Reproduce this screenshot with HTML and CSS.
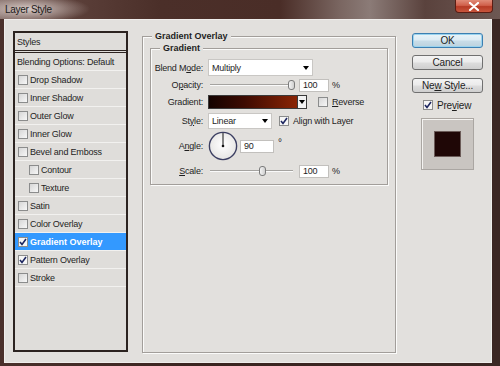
FILE: index.html
```html
<!DOCTYPE html>
<html lang="en">
<head>
    <meta charset="UTF-8">
    <title>Layer Style</title>
    <link rel="stylesheet" href="styles.css">
</head>
<body>

    <div class="window">
        <div class="titlebar">
            <span class="title">Layer Style</span>
            <div class="close">
                <svg width="12" height="9" viewBox="0 0 12 9"><path d="M2 1 L10 8 M10 1 L2 8" stroke="#fff" stroke-width="2.2" stroke-linecap="round"/></svg>
            </div>
        </div>

        <div class="client">
            <!-- Styles list -->
            <div class="style-list">
                <div class="item head">Styles</div>
                <div class="item plain">Blending Options: Default</div>
                <div class="item"><span class="cb"></span>Drop Shadow</div>
                <div class="item"><span class="cb"></span>Inner Shadow</div>
                <div class="item"><span class="cb"></span>Outer Glow</div>
                <div class="item"><span class="cb"></span>Inner Glow</div>
                <div class="item"><span class="cb"></span>Bevel and Emboss</div>
                <div class="item sub"><span class="cb"></span>Contour</div>
                <div class="item sub"><span class="cb"></span>Texture</div>
                <div class="item"><span class="cb"></span>Satin</div>
                <div class="item"><span class="cb"></span>Color Overlay</div>
                <div class="item selected"><span class="cb checked"><svg width="8" height="8" viewBox="0 0 8 8"><path d="M1 4 L3 6.5 L7 1" stroke="#1d2660" stroke-width="1.6" fill="none"/></svg></span>Gradient Overlay</div>
                <div class="item"><span class="cb checked"><svg width="8" height="8" viewBox="0 0 8 8"><path d="M1 4 L3 6.5 L7 1" stroke="#1d2660" stroke-width="1.6" fill="none"/></svg></span>Pattern Overlay</div>
                <div class="item"><span class="cb"></span>Stroke</div>
            </div>

            <!-- Gradient overlay settings -->
            <fieldset class="group outer">
                <legend>Gradient Overlay</legend>
                <fieldset class="group inner">
                    <legend>Gradient</legend>

                    <div class="row r-blend">
                        <label>Blend M<u>o</u>de:</label>
                        <div class="select wide">Multiply<span class="arrow"></span></div>
                    </div>

                    <div class="row r-opacity">
                        <label>O<u>p</u>acity:</label>
                        <div class="slider"><span class="track"></span><span class="thumb" style="left: 80px"></span></div>
                        <div class="input num">100</div>
                        <span class="unit">%</span>
                    </div>

                    <div class="row r-gradient">
                        <label>Gradient:</label>
                        <div class="gradient-pick"><span class="ramp"></span><span class="drop"><span class="arrow"></span></span></div>
                        <span class="cb"></span>
                        <span class="cb-label"><u>R</u>everse</span>
                    </div>

                    <div class="row r-style">
                        <label>St<u>y</u>le:</label>
                        <div class="select short">Linear<span class="arrow"></span></div>
                        <span class="cb checked"><svg width="8" height="8" viewBox="0 0 8 8"><path d="M1 4 L3 6.5 L7 1" stroke="#1d2660" stroke-width="1.6" fill="none"/></svg></span>
                        <span class="cb-label">Ali<u>g</u>n with Layer</span>
                    </div>

                    <div class="row r-angle">
                        <label>A<u>n</u>gle:</label>
                        <svg class="dial" width="30" height="30" viewBox="0 0 30 30">
                            <defs>
                                <radialGradient id="dialFill" cx="50%" cy="45%" r="60%">
                                    <stop offset="0" stop-color="#ffffff"/>
                                    <stop offset="1" stop-color="#e4e3e1"/>
                                </radialGradient>
                            </defs>
                            <circle cx="15" cy="15" r="13.6" fill="url(#dialFill)" stroke="#3c3f62" stroke-width="1.4"/>
                            <line x1="15" y1="15" x2="15" y2="2" stroke="#111" stroke-width="1"/>
                            <circle cx="15" cy="15" r="1.3" fill="#111"/>
                        </svg>
                        <div class="input angle">90</div>
                        <span class="unit deg">°</span>
                    </div>

                    <div class="row r-scale">
                        <label><u>S</u>cale:</label>
                        <div class="slider"><span class="track"></span><span class="thumb" style="left: 51px"></span></div>
                        <div class="input num">100</div>
                        <span class="unit">%</span>
                    </div>
                </fieldset>
            </fieldset>

            <!-- Buttons and preview -->
            <div class="side">
                <div class="btn default"><span>OK</span></div>
                <div class="btn"><span>Cancel</span></div>
                <div class="btn"><span>Ne<u>w</u> Style...</span></div>
                <div class="preview-check">
                    <span class="cb checked"><svg width="8" height="8" viewBox="0 0 8 8"><path d="M1 4 L3 6.5 L7 1" stroke="#1d2660" stroke-width="1.6" fill="none"/></svg></span>
                    <span class="cb-label">Pre<u>v</u>iew</span>
                </div>
                <div class="swatch"><div class="swatch-inner"></div></div>
            </div>
        </div>
    </div>

</body>
</html>
```

FILE: styles.css
```css
body {
    margin: 0;
    background-color: #3a2622;
    font-family: 'Liberation Sans', Arial, sans-serif;
    font-size: 9px;
    letter-spacing: -0.2px;
    color: #1e1e1e;
}

.window {
    width: 500px;
    height: 366px;
    display: flex;
    flex-direction: column;
    background: linear-gradient(90deg, #4a302b 0, #3a2420 40%, #3b2723 100%);
}

/* Title bar */
.titlebar {
    height: 19px;
    flex-shrink: 0;
    display: flex;
    align-items: center;
    padding-left: 5px;
    background:
        radial-gradient(ellipse 62px 14px at 28px 9px, rgba(226, 214, 210, 0.9), rgba(226, 214, 210, 0)),
        linear-gradient(90deg, #7c6560 0, #5c403a 70px, #4b2f29 160px, #4a2d27 280px, #7a6661 340px, #8b7b77 370px, #5a423d 425px, #6d5853 500px);
}

.title {
    font-size: 10px;
    letter-spacing: -0.3px;
    color: #1a1a1a;
}

.close {
    margin-left: auto;
    margin-right: 7px;
    align-self: flex-start;
    width: 38px;
    height: 13px;
    box-sizing: border-box;
    border: 1px solid #5a1d14;
    border-top: none;
    border-radius: 0 0 4px 4px;
    background: linear-gradient(#e08b78 0, #d0604b 45%, #b63a25 55%, #c9563d 100%);
    display: flex;
    align-items: center;
    justify-content: center;
}

/* Client area */
.client {
    flex: 1;
    margin: 0 8px 3px 4px;
    background-color: #e2e0dd;
    border: 1px solid #efedeb;
    display: flex;
    align-items: flex-start;
    padding: 11px 8px 0 8px;
}

/* Styles list */
.style-list {
    width: 115px;
    height: 321px;
    box-sizing: border-box;
    border: 2px solid #2c2320;
    background-color: #dfddda;
    flex-shrink: 0;
}

.item {
    height: 17px;
    border-bottom: 1px solid #f2f1ef;
    display: flex;
    align-items: center;
    padding-left: 3px;
    white-space: nowrap;
}

.item.head,
.item.plain {
    padding-left: 2px;
}

.item.head {
    border-bottom: 3px double #2c2320;
}

.item.sub {
    padding-left: 14px;
}

.item.selected {
    background-color: #3399ff;
    color: #fff;
    font-weight: bold;
    letter-spacing: 0;
}

.item .cb {
    margin-right: 2px;
}

/* Checkbox */
.cb {
    width: 10px;
    height: 10px;
    box-sizing: border-box;
    border: 1px solid #8b8c8c;
    background: linear-gradient(135deg, #d6d6d6, #f7f7f7);
    display: inline-flex;
    align-items: center;
    justify-content: center;
    flex-shrink: 0;
}

.cb.checked {
    background: #f6f6f6;
}

.cb-label {
    margin-left: 4px;
}

/* Group boxes */
.group {
    margin: 0;
    min-width: 0;
    border: 1px solid #a29e9a;
    box-shadow: inset 1px 1px 0 #fbfbfa, 1px 1px 0 #fbfbfa;
}

.group legend {
    font-weight: bold;
    letter-spacing: 0;
    line-height: 11px;
    padding: 0 3px;
    background-color: #e2e0dd;
}

.outer {
    width: 254px;
    height: 322px;
    box-sizing: border-box;
    margin-left: 14px;
    padding: 0 7px;
    flex-shrink: 0;
}

.outer > legend {
    margin-left: 2px;
}

.inner {
    margin-top: 1px;
    padding: 5px 0 6px 0;
}

.inner > legend {
    margin-left: 9px;
}

/* Form rows */
.row {
    display: flex;
    align-items: center;
}

.row label {
    width: 52px;
    text-align: right;
    margin-right: 5px;
    flex-shrink: 0;
}

.r-blend { height: 17px; }
.r-opacity { height: 16px; margin-top: 1px; }
.r-gradient { height: 16px; margin-top: 1px; }
.r-style { height: 17px; margin-top: 2px; }
.r-angle { height: 30px; margin-top: 2px; }
.r-scale { height: 14px; margin-top: 3px; }

.select {
    height: 17px;
    box-sizing: border-box;
    background-color: #fff;
    border: 1px solid #c9c7c4;
    display: flex;
    align-items: center;
    padding-left: 3px;
}

.select.wide { width: 105px; }
.select.short { width: 64px; height: 16px; margin-right: 7px; }

.select .arrow {
    margin-left: auto;
    margin-right: 3px;
}

.arrow {
    width: 0;
    height: 0;
    border-left: 3.5px solid transparent;
    border-right: 3.5px solid transparent;
    border-top: 4px solid #000;
}

.slider {
    width: 87px;
    height: 12px;
    position: relative;
    margin-right: 4px;
}

.track {
    position: absolute;
    left: 2px;
    right: 2px;
    top: 5px;
    height: 1px;
    background-color: #a5a3a0;
    border-bottom: 1px solid #fafafa;
}

.thumb {
    position: absolute;
    top: 1px;
    width: 7px;
    height: 10px;
    box-sizing: border-box;
    border: 1px solid #7b7b7b;
    border-radius: 3px;
    background: linear-gradient(90deg, #f4f4f4, #cfcfcf);
}

.input {
    height: 13px;
    box-sizing: border-box;
    background-color: #fff;
    border: 1px solid #c2c0bd;
    display: flex;
    align-items: center;
    padding-left: 3px;
}

.input.num { width: 30px; }

.input.angle {
    width: 34px;
    margin-left: 2px;
}

.unit {
    margin-left: 3px;
}

.unit.deg {
    margin-left: 4px;
    align-self: flex-start;
    margin-top: 6px;
    font-size: 10px;
    color: #1e1e1e;
}

.gradient-pick {
    width: 99px;
    height: 14px;
    box-sizing: border-box;
    border: 1px solid #3a3a3a;
    display: flex;
    margin-right: 11px;
}

.ramp {
    flex: 1;
    background: linear-gradient(90deg, #140300 0%, #3d0b02 40%, #8a2404 100%);
}

.drop {
    width: 8px;
    background-color: #f2f2f2;
    border-left: 1px solid #3a3a3a;
    display: flex;
    align-items: center;
    justify-content: center;
}

.drop .arrow {
    border-left-width: 3px;
    border-right-width: 3px;
}

.dial {
    flex-shrink: 0;
}

/* Right column */
.side {
    width: 71px;
    margin-left: 16px;
    margin-top: 2px;
    display: flex;
    flex-direction: column;
}

.btn {
    height: 15px;
    box-sizing: border-box;
    border: 1px solid #707070;
    border-radius: 3px;
    background: linear-gradient(#f3f3f3 0, #ebebeb 48%, #dddddd 52%, #cfcfcf 100%);
    display: flex;
    align-items: center;
    justify-content: center;
    font-size: 10px;
    margin-bottom: 7px;
}

.btn.default {
    border-color: #3c7fb1;
    box-shadow: inset 0 0 0 1px #9ad3ee;
    background: linear-gradient(#eaf4f9 0, #dcebf3 48%, #c9dde8 52%, #bcd2de 100%);
}

.btn:nth-child(2) {
    margin-bottom: 8px;
}

.preview-check {
    display: flex;
    align-items: center;
    padding-left: 11px;
    height: 10px;
    font-size: 10px;
}

.swatch {
    width: 53px;
    height: 52px;
    box-sizing: border-box;
    margin: 8px 0 0 9px;
    background-color: #c9c5c1;
    border: 1px solid #aaa6a2;
    box-shadow: inset 1px 1px 0 #f4f3f1;
    display: flex;
    align-items: center;
    justify-content: center;
}

.swatch-inner {
    width: 27px;
    height: 26px;
    box-sizing: border-box;
    background-color: #1f0706;
    border: 1px solid #6b5b58;
}
```
